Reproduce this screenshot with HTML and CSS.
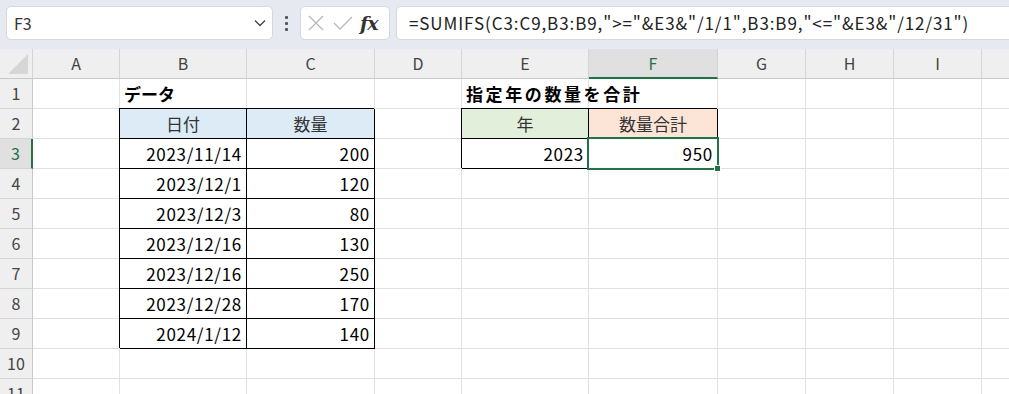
FILE: index.html
```html
<!DOCTYPE html>
<html lang="ja">
<head>
    <meta charset="UTF-8">
    <meta name="viewport" content="width=device-width, initial-scale=1.0">
    <title>SUMIFS</title>
    <link rel="stylesheet" href="styles.css">
</head>
<body>
    <div class="topbar">
        <div class="namebox">
            <span>F3</span>
            <svg width="12" height="8" viewBox="0 0 12 8"><path d="M1 1.5 L6 6.5 L11 1.5" fill="none" stroke="#444" stroke-width="1.3"/></svg>
        </div>
        <div class="dots"><i></i><i></i><i></i></div>
        <div class="fxbtns">
            <svg width="16" height="16" viewBox="0 0 16 16"><path d="M1 1 L15 15 M15 1 L1 15" stroke="#b8b8b8" stroke-width="1.3"/></svg>
            <svg width="20" height="16" viewBox="0 0 20 16"><path d="M1 8 L7 14 L19 2" fill="none" stroke="#b8b8b8" stroke-width="1.3"/></svg>
            <span class="fx">fx</span>
        </div>
        <div class="formula">=SUMIFS(C3:C9,B3:B9,"&gt;="&amp;E3&amp;"/1/1",B3:B9,"&lt;="&amp;E3&amp;"/12/31")</div>
    </div>
    <div class="sheet" id="sheet"></div>

    <script>
        const cols = ['A', 'B', 'C', 'D', 'E', 'F', 'G', 'H', 'I', ''];
        const rows = [
            { B: ['データ', 'title'], E: ['指定年の数量を合計', 'title wide'] },
            { B: ['日付', 'hd blue bd'], C: ['数量', 'hd blue bd'], E: ['年', 'hd green bd'], F: ['数量合計', 'hd orange bd'] },
            { B: ['2023/11/14', 'num bd'], C: ['200', 'num bd'], E: ['2023', 'num bd'], F: ['950', 'num bd selected'] },
            { B: ['2023/12/1', 'num bd'], C: ['120', 'num bd'] },
            { B: ['2023/12/3', 'num bd'], C: ['80', 'num bd'] },
            { B: ['2023/12/16', 'num bd'], C: ['130', 'num bd'] },
            { B: ['2023/12/16', 'num bd'], C: ['250', 'num bd'] },
            { B: ['2023/12/28', 'num bd'], C: ['170', 'num bd'] },
            { B: ['2024/1/12', 'num bd'], C: ['140', 'num bd'] },
            {},
            {}
        ];

        const sheet = document.getElementById('sheet');
        let html = '<div class="corner"></div>';
        cols.forEach((c) => {
            html += `<div class="colhead${c === 'F' ? ' active' : ''}">${c}</div>`;
        });
        rows.forEach((row, i) => {
            html += `<div class="rowhead${i === 2 ? ' active' : ''}">${i + 1}</div>`;
            cols.forEach((c) => {
                const cell = row[c];
                if (cell) {
                    html += `<div class="cell ${cell[1]}">${cell[0]}</div>`;
                } else {
                    html += '<div class="cell"></div>';
                }
            });
        });
        sheet.innerHTML = html;
    </script>
</body>
</html>
```

FILE: styles.css
```css
body {
    margin: 0;
    font-family: "Noto Sans CJK JP", "Noto Sans", sans-serif;
    background-color: #fff;
    overflow: hidden;
    width: 1009px;
    height: 394px;
}
.topbar {
    height: 49px;
    background-color: #e6e9ef;
    display: flex;
    align-items: flex-start;
    padding: 6px 0 0 6px;
    box-sizing: border-box;
}
.namebox {
    width: 267px;
    height: 34px;
    box-sizing: border-box;
    background-color: white;
    border: 1px solid #d6d8dc;
    border-radius: 5px;
    display: flex;
    align-items: center;
    justify-content: space-between;
    padding: 0 6px 0 7px;
    font-size: 16px;
    color: #333;
}
.dots {
    width: 27px;
    height: 34px;
    display: flex;
    flex-direction: column;
    align-items: center;
    justify-content: center;
    gap: 3px;
}
.dots i {
    width: 3px;
    height: 3px;
    background-color: #555;
    border-radius: 1px;
}
.fxbtns {
    width: 90px;
    height: 34px;
    box-sizing: border-box;
    background-color: white;
    border: 1px solid #d6d8dc;
    border-radius: 5px;
    display: flex;
    align-items: center;
    gap: 9px;
    padding-left: 7px;
}
.fx {
    font-family: "DejaVu Serif", "Liberation Serif", serif;
    font-style: italic;
    font-weight: bold;
    font-size: 19px;
    color: #333;
    letter-spacing: -1px;
    margin-left: -2px;
}
.formula {
    flex: 1;
    height: 34px;
    box-sizing: border-box;
    margin-left: 6px;
    background-color: white;
    border: 1px solid #d6d8dc;
    border-right: none;
    border-radius: 5px 0 0 5px;
    padding-left: 12px;
    font-size: 17px;
    line-height: 32px;
    letter-spacing: 0.9px;
    color: #222;
    white-space: nowrap;
}
.sheet {
    display: grid;
    grid-template-columns: 33px 87px 127px 128px 87px 127px 129px 88px 88px 88px 40px;
    grid-auto-rows: 30px;
    font-size: 17px;
    color: #000;
}
.sheet > div {
    box-sizing: border-box;
    border-right: 1px solid #e1e1e1;
    border-bottom: 1px solid #e1e1e1;
    white-space: nowrap;
}
.corner {
    background-color: #efefef;
    position: relative;
}
.corner::after {
    content: "";
    position: absolute;
    right: 4px;
    bottom: 4px;
    border-left: 20px solid transparent;
    border-bottom: 20px solid #d6d6d6;
}
.sheet > .colhead,
.sheet > .corner {
    border-right-color: #d4d4d4;
    border-bottom-color: #c8c8c8;
}
.colhead {
    background-color: #efefef;
    color: #444;
    font-size: 16px;
    text-align: center;
    line-height: 29px;
}
.sheet > .colhead.active {
    background-color: #e0e0e0;
    color: #217346;
    border-bottom: 2px solid #217346;
}
.sheet > .rowhead {
    background-color: #efefef;
    color: #444;
    font-size: 16px;
    text-align: center;
    line-height: 29px;
    border-right-color: #c8c8c8;
    border-bottom-color: #d4d4d4;
}
.sheet > .rowhead.active {
    background-color: #e0e0e0;
    color: #217346;
    border-right: 2px solid #217346;
}
.cell {
    line-height: 29px;
    padding: 0 4px;
}
.title {
    font-weight: bold;
}
.title.wide {
    letter-spacing: 2.6px;
}
.hd {
    text-align: center;
    color: #333;
}
.num {
    text-align: right;
    padding-right: 4px;
    letter-spacing: 0.7px;
}
.sheet > .bd {
    border-right-color: #000;
    border-bottom-color: #000;
    box-shadow: -1px -1px 0 #000;
}
.blue {
    background-color: #ddebf7;
}
.green {
    background-color: #e2efda;
}
.orange {
    background-color: #fce4d6;
}
.selected {
    position: relative;
}
.selected::before {
    content: "";
    position: absolute;
    left: -2px;
    top: -2px;
    right: -2px;
    bottom: -2px;
    border: 2px solid #217346;
}
.selected::after {
    content: "";
    position: absolute;
    right: -4px;
    bottom: -4px;
    width: 5px;
    height: 5px;
    background-color: #217346;
    border: 1px solid white;
}
```
